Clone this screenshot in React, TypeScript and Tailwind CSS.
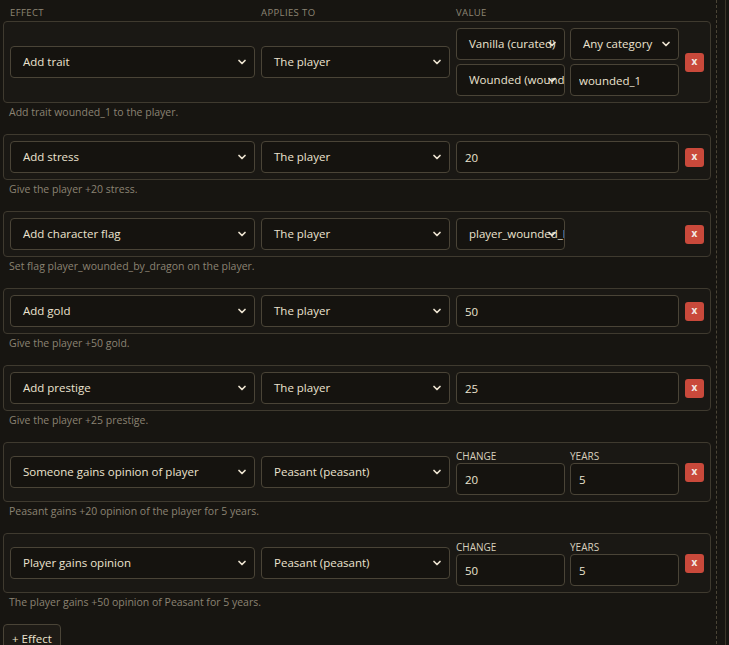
import { ChevronDown } from 'lucide-react'

type Row = {
  effect: string
  target: string
  kind: 'trait' | 'number' | 'flag' | 'opinion'
  value?: string
  years?: string
  desc: string
}

const ROWS: Row[] = [
  { effect: 'Add trait', target: 'The player', kind: 'trait', desc: 'Add trait wounded_1 to the player.' },
  { effect: 'Add stress', target: 'The player', kind: 'number', value: '20', desc: 'Give the player +20 stress.' },
  {
    effect: 'Add character flag',
    target: 'The player',
    kind: 'flag',
    value: 'player_wounded_by_dragon',
    desc: 'Set flag player_wounded_by_dragon on the player.',
  },
  { effect: 'Add gold', target: 'The player', kind: 'number', value: '50', desc: 'Give the player +50 gold.' },
  { effect: 'Add prestige', target: 'The player', kind: 'number', value: '25', desc: 'Give the player +25 prestige.' },
  {
    effect: 'Someone gains opinion of player',
    target: 'Peasant (peasant)',
    kind: 'opinion',
    value: '20',
    years: '5',
    desc: 'Peasant gains +20 opinion of the player for 5 years.',
  },
  {
    effect: 'Player gains opinion',
    target: 'Peasant (peasant)',
    kind: 'opinion',
    value: '50',
    years: '5',
    desc: 'The player gains +50 opinion of Peasant for 5 years.',
  },
]

function Select({ value }: { value: string }) {
  return (
    <div className="relative h-[32px] rounded-[4px] border border-[#4a4437] bg-[#15130f]">
      <div className="h-full overflow-hidden whitespace-nowrap pl-[12px] pr-[3px] text-[11.5px] leading-[30px] text-[#ece3d0]">
        {value}
      </div>
      <ChevronDown
        className="absolute right-[6px] top-1/2 h-[12px] w-[12px] -translate-y-1/2 text-[#ece3d0]"
        strokeWidth={3.5}
      />
    </div>
  )
}

function Field({ value }: { value: string }) {
  return (
    <input
      readOnly
      value={value}
      className="h-[32px] w-full rounded-[4px] border border-[#4a4437] bg-[#15130f] px-[8px] text-[11.5px] text-[#ece3d0] outline-none"
    />
  )
}

function SubLabel({ children }: { children: string }) {
  return <div className="h-[14px] text-[10px] font-medium leading-[14px] text-[#d8cfbd]">{children}</div>
}

function ValueCell({ row }: { row: Row }) {
  if (row.kind === 'trait') {
    return (
      <div className="grid grid-cols-2 gap-x-[5px] gap-y-[4px]">
        <Select value="Vanilla (curated)" />
        <Select value="Any category" />
        <Select value="Wounded (wounded_1)" />
        <Field value="wounded_1" />
      </div>
    )
  }
  if (row.kind === 'flag') {
    return (
      <div className="grid grid-cols-2 gap-x-[5px]">
        <Select value={row.value!} />
      </div>
    )
  }
  if (row.kind === 'opinion') {
    return (
      <div className="grid grid-cols-2 gap-x-[5px]">
        <div>
          <SubLabel>CHANGE</SubLabel>
          <Field value={row.value!} />
        </div>
        <div>
          <SubLabel>YEARS</SubLabel>
          <Field value={row.years!} />
        </div>
      </div>
    )
  }
  return <Field value={row.value!} />
}

export default function App() {
  return (
    <div
      className="flex min-h-[645px] bg-[#171511] text-[#ece3d0]"
      style={{ fontFamily: '"Open Sans", "Noto Sans", sans-serif' }}
    >
      <div className="w-[716px] shrink-0 pl-[3px] pr-[5px] pt-[7px]">
        {/* column headings */}
        <div className="grid grid-cols-[1fr_189px_223px_19px] gap-x-[6px] px-[7px] pb-[2px] text-[9.5px] uppercase leading-[12px] tracking-[0.04em] text-[#8d8574]">
          <div>Effect</div>
          <div>Applies to</div>
          <div>Value</div>
          <div />
        </div>

        {ROWS.map((row) => (
          <div key={row.effect} className="mb-[15px]">
            <div className="grid grid-cols-[1fr_189px_223px_19px] items-center gap-x-[6px] rounded-[4px] border border-[#3f3a2f] bg-[#1a1814] px-[6px] py-[6px]">
              <Select value={row.effect} />
              <Select value={row.target} />
              <ValueCell row={row} />
              <button
                type="button"
                className="flex h-[19px] w-[19px] items-center justify-center rounded-[3px] bg-[#c9493b] pb-[2px] text-[10px] font-bold text-[#f3e9e6]"
              >
                x
              </button>
            </div>
            <p className="mt-[2px] pl-[6px] text-[10.5px] leading-[14px] text-[#8b8373]">{row.desc}</p>
          </div>
        ))}

        <button
          type="button"
          className="h-[30px] rounded-[4px] border border-[#4a4437] bg-[#1e1b16] px-[8px] text-[11.5px] text-[#ece3d0]"
        >
          + Effect
        </button>
      </div>

      {/* resize handle and panel edge */}
      <div className="w-[9px] shrink-0 border-l border-dashed border-[#4a4436]" />
      <div className="flex-1 border-l border-[#3a3529]" />
    </div>
  )
}
